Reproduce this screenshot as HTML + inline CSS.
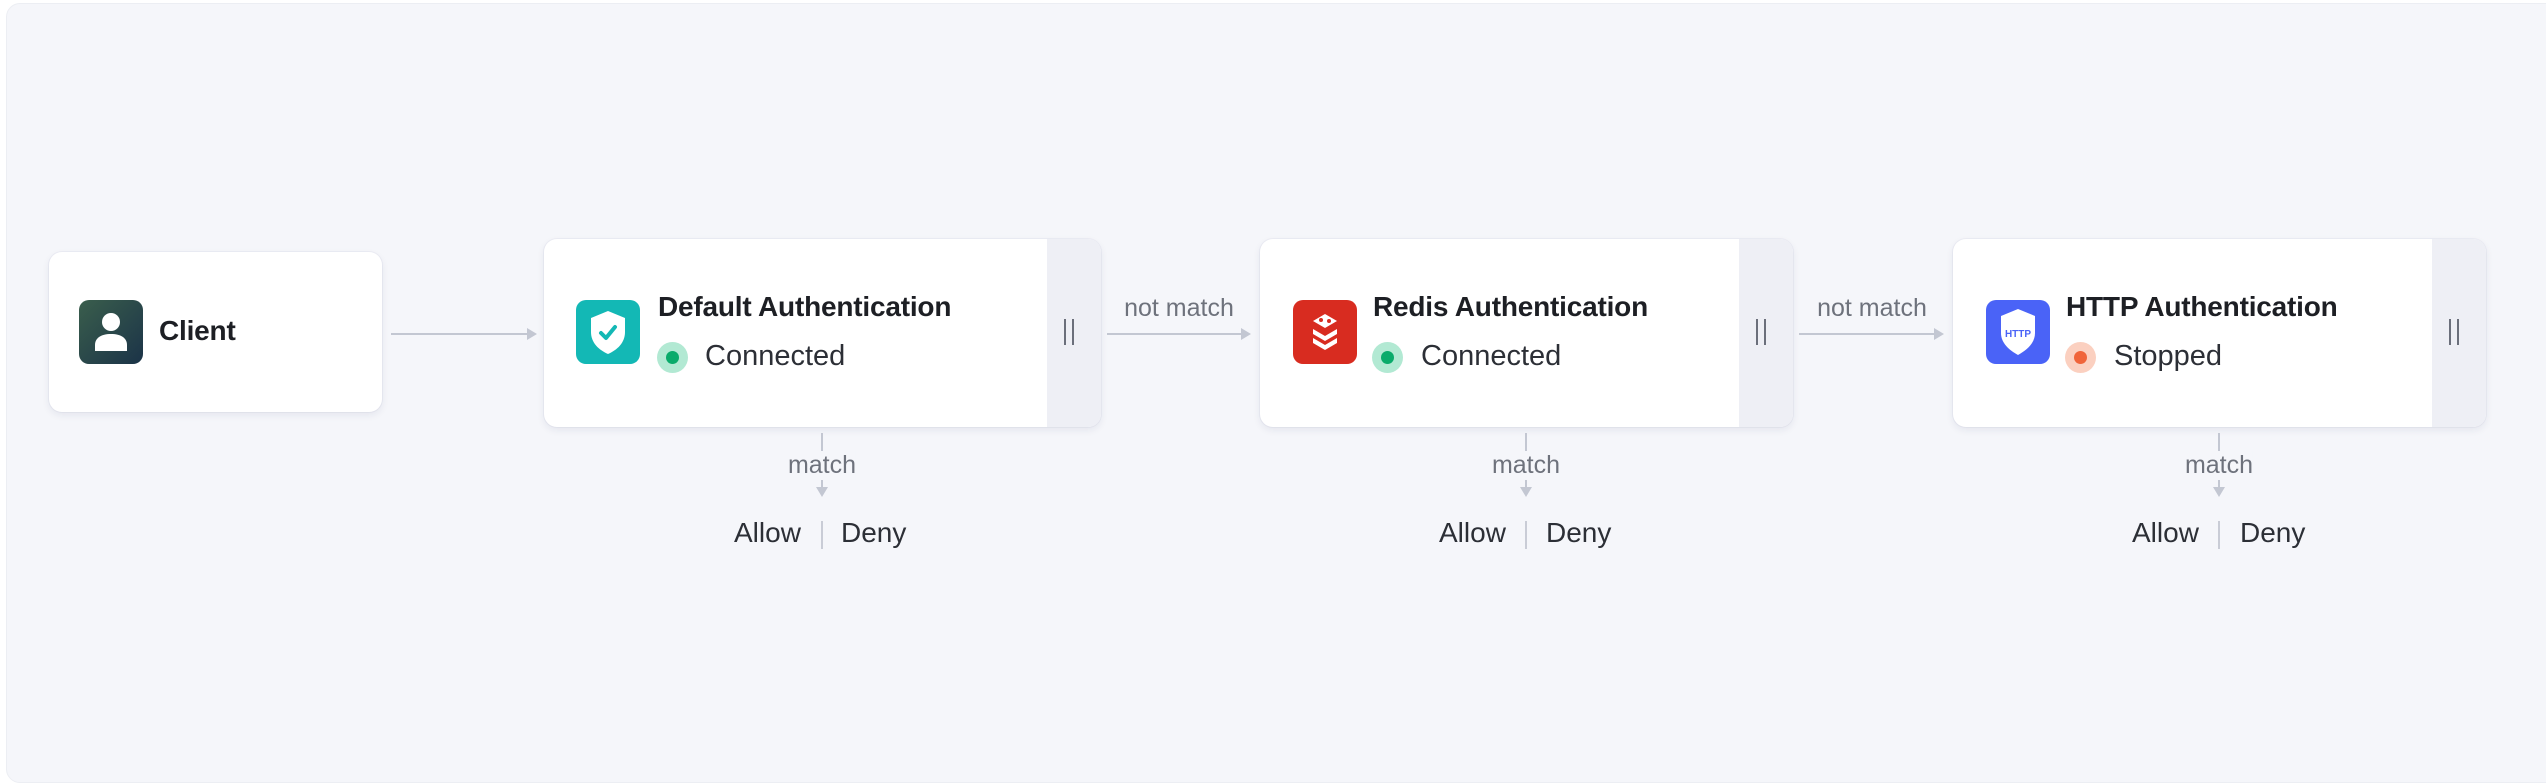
<!DOCTYPE html>
<html><head><meta charset="utf-8"><style>
*{margin:0;padding:0;box-sizing:border-box}
body{width:2546px;height:762px;background:#fff;font-family:"Liberation Sans",Arial,sans-serif;position:relative;overflow:hidden}
.bg{position:absolute;left:6px;top:3px;width:2560px;height:780px;background:#f5f6fa;border-radius:14px;border:1px solid #eceef3}
.card{position:absolute;background:#fff;border-radius:13px;box-shadow:0 3px 8px rgba(30,40,90,.08),0 0 0 1px rgba(230,232,240,.6);overflow:hidden}
.side{position:absolute;right:0;top:0;bottom:0;width:54px;background:#eeeff5}
.side span{position:absolute;left:17px;top:80px;width:10px;height:26px;border-left:2px solid #6b6f7b;border-right:2px solid #6b6f7b}
.ic{position:absolute;width:64px;height:64px;border-radius:10px}
.t{position:absolute;font-size:28px;font-weight:bold;color:#1d1f24;white-space:nowrap;letter-spacing:-0.2px}
.s{position:absolute;font-size:29px;color:#2c2f36;white-space:nowrap}
.dot{position:absolute;width:31px;height:31px;border-radius:50%}
.dot i{position:absolute;left:9px;top:9px;width:13px;height:13px;border-radius:50%}
.hl{position:absolute;height:2px;background:#c3c7d2}
.ah{position:absolute;width:0;height:0;border-top:6px solid transparent;border-bottom:6px solid transparent;border-left:10px solid #c3c7d2}
.vl{position:absolute;width:2px;background:#c3c7d2}
.ad{position:absolute;width:0;height:0;border-left:6px solid transparent;border-right:6px solid transparent;border-top:10px solid #c3c7d2}
.lbl{position:absolute;font-size:25px;color:#6e727c;background:#f5f6fa;white-space:nowrap;transform:translateX(-50%)}
.ad2{position:absolute;font-size:28px;color:#2c2f36;white-space:nowrap}
.sep{position:absolute;width:2px;height:28px;background:#c9ccd6}
</style></head><body>
<div class="bg"></div>

<div class="card" style="left:49px;top:252px;width:333px;height:160px">
 <div class="ic" style="left:30px;top:48px;background:linear-gradient(135deg,#3a5e4c,#1b3348)">
  <svg width="64" height="64" viewBox="0 0 64 64"><circle cx="32" cy="22" r="9" fill="#fff"/><path d="M16 51v-6c0-7 6-11 16-11s16 4 16 11v6z" fill="#fff"/></svg>
 </div>
 <div class="t" style="left:110px;top:63px">Client</div>
</div>
<div class="hl" style="left:391px;top:333px;width:138px"></div><div class="ah" style="left:527px;top:328px"></div>

<div class="card" style="left:544px;top:239px;width:557px;height:188px">
 <div class="ic" style="left:32px;top:61px;background:#13b8b5">
  <svg width="64" height="64" viewBox="0 0 64 64"><path d="M32 11l17 7v14c0 11-8 18-17 22c-9-4-17-11-17-22V18z" fill="#fff"/><path d="M25 33l5 5 9-11" stroke="#13b8b5" stroke-width="4" fill="none" stroke-linecap="round" stroke-linejoin="round"/></svg>
 </div>
 <div class="t" style="left:114px;top:52px">Default Authentication</div>
 <div class="dot" style="left:113px;top:103px;background:#b2e9d3"><i style="background:#0aab6b"></i></div>
 <div class="s" style="left:161px;top:101px">Connected</div>
 <div class="side"><span></span></div>
</div>
<div class="lbl" style="left:1179px;top:294px">not match</div>
<div class="hl" style="left:1107px;top:333px;width:137px"></div><div class="ah" style="left:1241px;top:328px"></div>

<div class="card" style="left:1260px;top:239px;width:533px;height:188px">
 <div class="ic" style="left:33px;top:61px;background:#d82c20">
  <svg width="64" height="64" viewBox="0 0 64 64"><path d="M32 14l12 7-12 7-12-7z" fill="#fff"/><path d="M20 29l12 7 12-7v5l-12 7-12-7z" fill="#fff"/><path d="M20 38l12 7 12-7v5l-12 7-12-7z" fill="#fff"/><circle cx="28" cy="20" r="2" fill="#d82c20"/><circle cx="36" cy="21" r="2" fill="#d82c20"/></svg>
 </div>
 <div class="t" style="left:113px;top:52px">Redis Authentication</div>
 <div class="dot" style="left:112px;top:103px;background:#b2e9d3"><i style="background:#0aab6b"></i></div>
 <div class="s" style="left:161px;top:101px">Connected</div>
 <div class="side"><span></span></div>
</div>
<div class="lbl" style="left:1872px;top:294px">not match</div>
<div class="hl" style="left:1799px;top:333px;width:138px"></div><div class="ah" style="left:1934px;top:328px"></div>

<div class="card" style="left:1953px;top:239px;width:533px;height:188px">
 <div class="ic" style="left:33px;top:61px;background:#4a63f7">
  <svg width="64" height="64" viewBox="0 0 64 64"><path d="M32 9l17 7v17c0 10-8 17-17 22c-9-5-17-12-17-22V16z" fill="#fff"/><text x="32" y="37" font-size="10" font-weight="bold" fill="#4a63f7" text-anchor="middle" font-family="Liberation Sans,sans-serif">HTTP</text></svg>
 </div>
 <div class="t" style="left:113px;top:52px">HTTP Authentication</div>
 <div class="dot" style="left:112px;top:103px;background:#fbd0c0"><i style="background:#f0643a"></i></div>
 <div class="s" style="left:161px;top:101px">Stopped</div>
 <div class="side"><span></span></div>
</div>

<div class="vl" style="left:821px;top:433px;height:56px"></div><div class="ad" style="left:816px;top:487px"></div>
<div class="lbl" style="left:822px;top:451px">match</div>
<div class="ad2" style="left:734px;top:517px">Allow</div><div class="sep" style="left:821px;top:521px"></div><div class="ad2" style="left:841px;top:517px">Deny</div>

<div class="vl" style="left:1525px;top:433px;height:56px"></div><div class="ad" style="left:1520px;top:487px"></div>
<div class="lbl" style="left:1526px;top:451px">match</div>
<div class="ad2" style="left:1439px;top:517px">Allow</div><div class="sep" style="left:1525px;top:521px"></div><div class="ad2" style="left:1546px;top:517px">Deny</div>

<div class="vl" style="left:2218px;top:433px;height:56px"></div><div class="ad" style="left:2213px;top:487px"></div>
<div class="lbl" style="left:2219px;top:451px">match</div>
<div class="ad2" style="left:2132px;top:517px">Allow</div><div class="sep" style="left:2218px;top:521px"></div><div class="ad2" style="left:2240px;top:517px">Deny</div>
</body></html>
